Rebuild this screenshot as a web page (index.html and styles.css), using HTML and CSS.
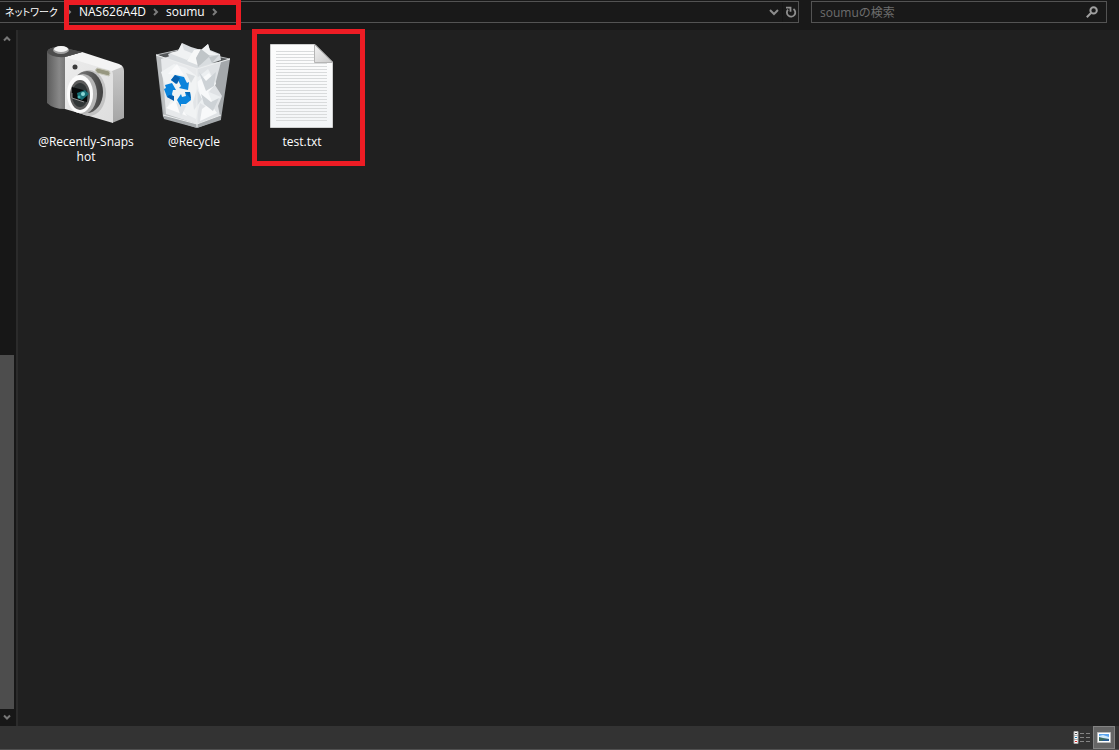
FILE: index.html
```html
<!DOCTYPE html>
<html lang="ja">
<head>
  <meta charset="UTF-8" />
  <meta name="viewport" content="width=device-width, initial-scale=1" />
  <title>soumu</title>
  <link rel="stylesheet" href="styles.css">
</head>
<body>

  <header class="toolbar">
    <nav class="address" aria-label="Address">
      <a href="#" class="crumb root">ネットワーク</a>
      <div class="path marked">
        <svg class="sep" viewBox="0 0 6 8"><path d="M1 1l3 3-3 3" /></svg>
        <a href="#" class="crumb">NAS626A4D</a>
        <svg class="sep" viewBox="0 0 6 8"><path d="M1 1l3 3-3 3" /></svg>
        <a href="#" class="crumb">soumu</a>
        <svg class="sep" viewBox="0 0 6 8"><path d="M1 1l3 3-3 3" /></svg>
      </div>
      <div class="address-tools">
        <button type="button" aria-label="History">
          <svg width="10" height="8" viewBox="0 0 10 8"><path d="M1 2l4 4 4-4" fill="none" stroke="#8c8c8c" stroke-width="2" /></svg>
        </button>
        <button type="button" class="refresh" aria-label="Refresh">
          <svg width="12" height="12" viewBox="0 0 12 12"><path d="M8.5 3A4.2 4.2 0 1 1 3 3.6M1 1.6h4.5v4.2" fill="none" stroke="#8f8f8f" stroke-width="1.8" /></svg>
        </button>
      </div>
    </nav>
    <form class="search" onsubmit="return false;">
      <input type="text" id="search" aria-label="soumuの検索" placeholder="soumuの検索" />
      <button type="submit" aria-label="Search">
        <svg width="12" height="12" viewBox="0 0 12 12"><circle cx="7.6" cy="4.4" r="3.2" fill="none" stroke="#a0a0a0" stroke-width="2" /><path d="M5.2 6.8L.8 11.2" stroke="#a0a0a0" stroke-width="2" /></svg>
      </button>
    </form>
  </header>

  <div class="content">
    <div class="scrollbar">
      <button type="button" aria-label="Scroll up">
        <svg width="8" height="7" viewBox="0 0 8 7"><path d="M1 5.5L4 2.5l3 3" /></svg>
      </button>
      <div class="track"><div class="thumb"></div></div>
      <button type="button" aria-label="Scroll down">
        <svg width="8" height="7" viewBox="0 0 8 7"><path d="M1 1.5l3 3 3-3" /></svg>
      </button>
    </div>

    <main class="files">
      <a href="#" class="file">
        <svg width="86" height="86" viewBox="0 0 86 86">
          <defs>
            <linearGradient id="grip" x1="0" x2="1"><stop offset="0" stop-color="#5c5c5c" /><stop offset=".35" stop-color="#888" /><stop offset="1" stop-color="#484848" /></linearGradient>
            <linearGradient id="front" x1="0" y1="0" x2="1" y2="1"><stop offset="0" stop-color="#ececec" /><stop offset="1" stop-color="#dedede" /></linearGradient>
            <linearGradient id="side" x1="0" x2="0" y1="0" y2="1"><stop offset="0" stop-color="#cacaca" /><stop offset="1" stop-color="#a5a5a5" /></linearGradient>
            <linearGradient id="barrel" x1="0" x2="1"><stop offset="0" stop-color="#8a8a8a" /><stop offset="1" stop-color="#404040" /></linearGradient>
          </defs>
          <path d="M68 28L78 23Q81 25 81 29V76L69 81Z" fill="url(#side)" />
          <path d="M22 14L66 27Q70 28 70 33V81L22 67Z" fill="url(#front)" />
          <path d="M22 15L39 10 76 22Q79 23 79 25L69 29Z" fill="#f4f4f4" />
          <path d="M4 10Q5 5 17 5L39 10 22 15V67Q10 67 4 61Z" fill="url(#grip)" />
          <path d="M4 10Q5 5 17 5L39 10 22 15Q8 16 4 10Z" fill="#4d4d4d" />
          <ellipse cx="18" cy="8" rx="8" ry="4" fill="#a0a0a0" />
          <ellipse cx="18" cy="7" rx="7" ry="3" fill="#f4f4f4" />
          <circle cx="32" cy="25" r="2.5" fill="#3c3c3c" />
          <path d="M54 26L66 29Q68 31 66 34L54 31Q51 28 54 26Z" fill="#979780" stroke="#c8c8bb" />
          <ellipse cx="46" cy="51" rx="17" ry="23" fill="#c3c3c3" />
          <ellipse cx="44" cy="50" rx="16" ry="21" fill="url(#barrel)" />
          <ellipse cx="40" cy="52" rx="14" ry="20" fill="#b5b5b5" />
          <ellipse cx="37" cy="52" rx="13" ry="19" fill="#fbfbfb" />
          <ellipse cx="37" cy="53" rx="10" ry="15" fill="#5c5c5c" />
          <ellipse cx="37" cy="53" rx="8" ry="12" fill="#303536" />
          <path d="M29 45L44 49V60L29 56Z" fill="#080a0b" />
          <path d="M29 51v5l12 4" fill="none" stroke="#aaa" stroke-width=".8" />
          <path d="M34 51l8-3 4 4-7 6-4-2z" fill="#176d74" />
          <circle cx="40" cy="52" r="2" fill="#8bd8d7" /><circle cx="36" cy="55" r="1.5" fill="#43afb0" />
        </svg>
        <span class="name">@Recently-Snaps<br>hot</span>
      </a>

      <a href="#" class="file">
        <svg width="86" height="86" viewBox="0 0 86 86">
          <path d="M5 13L32 7 79 17 46 27Z" fill="#55585a" stroke="#b9bcbe" />
          <path d="M5 13L46 27 79 17 70 77 46 86 12 75Z" fill="#a4a8ab" />
          <path d="M10 17L19 14 46 22 70 20 64 43 71 54 67 64 69 74 46 82 15 72 13 47 11 30Z" fill="#dfe2e5" />
          <path d="M17 12L27 9 31 1 40 5 50 8 57 2 59 8 69 12 70 18 46 26 19 17Z" fill="#d9dde0" />
          <path d="M31 1l2 7 10 4-7 6-18-7 9-2zM50 8l7-6 2 7 9 4-12 0z" fill="#f0f2f3" />
          <path d="M43 8l7-1-5 9 4 8-13-5z" fill="#f7f8f8" />
          <path d="M45 16l5-9 9 7-12 11zM58 15l10-2-7 8z" fill="#c0c5c8" />
          <path d="M10 30l13-8 12 4 12 9 10-8 8 14-7 9 12 5-13 11-8-5-4 16-12-6-16-7 5-10-7-9z" fill="#eceff1" />
          <path d="M17 32l9-10 7 11zM46 40l12-9 7 11-8 8 5 12-12-6zM15 66l10-8 11 16zM51 67l8-6 7 10-17 8z" fill="#f8f9fa" />
          <path d="M48 30l7 9 10-9-2 14-8 5zM50 52l10 8 8-4-6 13-9-7zM35 31l9 3-4 7z" fill="#cdd2d6" />
          <path d="M25 60l10 4-5 11zM42 60l4-13 5 10-8 11z" fill="#d9dde0" />
          <path d="M5 13L46 27V84L13 74Z" fill="#fff" opacity=".25" />
          <path d="M12 73L46 82 70 73V78L46 86 13 77Z" fill="#a6aaad" />
          <path d="M12 73L46 82 70 73M5 13L46 27 79 17M46 27V85" fill="none" stroke="#eceeef" />
          <g fill="#0b84dc">
            <path d="M20 38l4-5 9 2 3 6 2-1-1 8-9-2 2-2-3-6-2 4z" />
            <path d="M14 43l7-2 4 7-3 0-1 4 2 6-7-3-3-8 2-1z" />
            <path d="M34 50l5 0 1 8-5 4-5 0v3l-4-7 4-6 1 3 4-1z" />
          </g>
          <path d="M20 38l4-5 5 3-3 6z" fill="#075faf" /><path d="M16 55l2-2 5 1v5z" fill="#075faf" /><path d="M34 50l5 0 1 7z" fill="#056bbb" />
        </svg>
        <span class="name">@Recycle</span>
      </a>

      <a href="#" class="file marked">
        <svg width="86" height="86" viewBox="0 0 86 86">
          <defs>
            <linearGradient id="paper" x1="0" x2="0" y1="0" y2="1"><stop offset="0" stop-color="#fdfdfd" /><stop offset="1" stop-color="#f3f5f7" /></linearGradient>
            <linearGradient id="fold" x1="0" x2="1" y1="0" y2="1"><stop offset="0" stop-color="#f4f4f4" /><stop offset="1" stop-color="#c9c9c9" /></linearGradient>
            <pattern id="lines" width="4" height="3" patternUnits="userSpaceOnUse"><path d="M0 .5h4" stroke="#d9dbdc" /></pattern>
          </defs>
          <path d="M11.5 2.5H56L73.500 20V85.500H11.500Z" fill="url(#paper)" stroke="#cecfcf" />
          <path d="M17 9H55V21H68V80H17Z" fill="url(#lines)" />
          <path d="M55.500 2.500V20.500H73.500Z" fill="url(#fold)" stroke="#b5b5b5" />
        </svg>
        <span class="name">test.txt</span>
      </a>
    </main>
  </div>

  <footer class="statusbar">
    <button type="button" aria-label="Details view">
      <svg width="18" height="14" viewBox="0 0 18 14">
        <path d="M1 .5h4v12H1zM1 4.500h4M1 8.500h4" fill="#fff" stroke="#aaa" />
        <path d="M2 2h2v1H2z" fill="#444" /><path d="M2 6h2v1H2z" fill="#17a" /><path d="M2 10h2v1H2z" fill="#d22" />
        <path d="M7 2.500h4m2 0h4M7 6.500h4m2 0h4M7 10.500h4m2 0h4" stroke="#858585" />
      </svg>
    </button>
    <button type="button" class="active" aria-label="Large icons view">
      <svg width="14" height="12" viewBox="0 0 14 12">
        <path d="M.5.5h13v10H.5z" fill="#fff" stroke="#bbb" />
        <path d="M2 2h10v7H2z" fill="#5aa4ef" /><path d="M2 4l4-1 6 2v2H2z" fill="#cfe8fa" /><path d="M2 5l4 1 6 1v2H2z" fill="#3c695f" /><path d="M6 8l6-1v2H5z" fill="#285b94" />
      </svg>
    </button>
  </footer>

</body>
</html>
```

FILE: styles.css
```css
* {
  box-sizing: border-box;
}
body {
  margin: 0;
  height: 100vh;
  display: flex;
  flex-direction: column;
  background: #202020;
  color: #fff;
  font-family: "Open Sans", "Noto Sans CJK JP", sans-serif;
  font-size: 12px;
}
a {
  color: inherit;
  text-decoration: none;
}
button {
  display: flex;
  align-items: center;
  justify-content: center;
  padding: 0;
  border: 0;
  background: none;
}
svg {
  display: block;
  flex: none;
}

/* top bar */
.toolbar {
  display: flex;
  gap: 12px;
  height: 30px;
  padding: 1px 12px 7px 0;
  background: #191919;
}
.address {
  flex: 1;
  display: flex;
  align-items: center;
  border: 1px solid #535353;
  border-left: 0;
}
.crumb {
  line-height: 20px;
}
.root {
  width: 64px;
  padding-left: 5px;
  font-family: "Noto Sans CJK JP", sans-serif;
  font-size: 10px;
  font-feature-settings: "palt";
}
.path {
  display: flex;
  align-items: center;
  width: 177px;
  height: 20px;
  padding-left: 2px;
  gap: 7px;
}
.sep {
  width: 6px;
  height: 8px;
  fill: none;
  stroke: #7c7c7c;
  stroke-width: 2;
}
.address-tools {
  display: flex;
  align-self: stretch;
  margin-left: auto;
}
.address-tools button {
  width: 16px;
}
.address-tools .refresh {
  border-left: 1px solid #151515;
}
.search {
  display: flex;
  width: 296px;
  border: 1px solid #535353;
}
.search input {
  flex: 1;
  min-width: 0;
  padding: 0 8px;
  border: 0;
  outline: 0;
  background: none;
  color: #fff;
  font: inherit;
}
.search input::placeholder {
  color: #6d6d6d;
}
.search button {
  width: 28px;
}

/* red frames */
.marked {
  position: relative;
}
.marked::after {
  content: "";
  position: absolute;
  border: 5px solid #ed1c24;
  pointer-events: none;
}
.path.marked::after {
  inset: -2px 0 -8px 0;
}
.file.marked::after {
  inset: -1px -9px 0 4px;
}

/* scrollbar and files */
.content {
  flex: 1;
  display: flex;
  min-height: 0;
}
.scrollbar {
  display: flex;
  flex-direction: column;
  width: 18px;
  padding-right: 2px;
  background: #171717;
  border-right: 2px solid #2b2b2b;
}
.scrollbar button {
  width: 13px;
  height: 17px;
}
.scrollbar path {
  fill: none;
  stroke: #777;
  stroke-width: 2;
}
.track {
  flex: 1;
  display: flex;
  align-items: flex-end;
}
.thumb {
  width: 14px;
  height: 53.5%;
  background: #4d4d4d;
}
.files {
  flex: 1;
  display: flex;
  flex-wrap: wrap;
  align-content: flex-start;
  padding-left: 14px;
}
.file {
  display: flex;
  flex-direction: column;
  align-items: center;
  gap: 6px;
  width: 108px;
  height: 136px;
  padding-top: 12px;
}
.name {
  line-height: 15px;
  text-align: center;
}

/* bottom bar */
.statusbar {
  display: flex;
  justify-content: flex-end;
  height: 24px;
  padding-right: 4px;
  background: #333;
  border-bottom: 1px solid #505050;
}
.statusbar button {
  width: 22px;
}
.statusbar .active {
  background: #666;
  border: 1px solid #838383;
}
```
